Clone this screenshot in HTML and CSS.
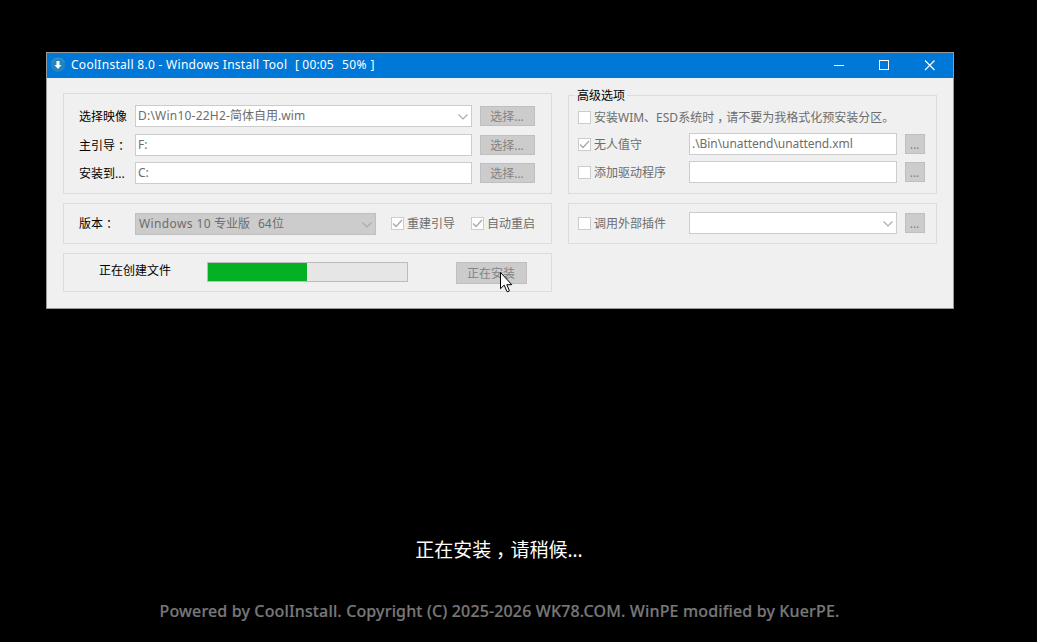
FILE: index.html
```
<!DOCTYPE html>
<html lang="zh-CN">
<head>
<meta charset="utf-8">
<title>CoolInstall 8.0</title>
<link rel="stylesheet" href="styles.css">
</head>
<body>
<main class="desktop">
  <section class="window">
    <header class="titlebar">
      <svg class="app-icon" width="16" height="16" viewBox="0 0 16 16"><circle cx="8" cy="8" r="7.2" fill="#2484bb"/><path d="M1.500 5.500a7 7 0 0 1 13 0" fill="none" stroke="#4699c8"/><path d="M6.500 4h3v4h2L8 12 4.500 8h2z" fill="#fff"/></svg>
      <h1 class="title"><span class="t-name">CoolInstall 8.0 - Windows Install Tool</span><span class="t-time">[ 00:05</span><span class="t-pct">50% ]</span></h1>
      <svg class="controls" width="104" height="12" viewBox="0 0 104 12" fill="none" stroke="#fff"><path d="M1 6.500h10"/><rect x="46.500" y="1.500" width="9" height="9"/><path d="M92 1.500l9.500 9.500M101.500 1.500L92 11" stroke-width="1.100"/></svg>
    </header>
    <div class="content">
      <div class="column left">
        <section class="panel paths">
          <div class="row"><label>选择映像</label><div class="field"><span class="f-path">D:\Win10-22H2-</span><span>简体自用</span><span class="f-ext">.wim</span><svg class="chevron" width="10" height="6" viewBox="0 0 10 6"><path d="M.5.5L5 5 9.500.5"/></svg></div><button class="btn">选择...</button></div>
          <div class="row second"><label>主引导<span class="mid">：</span></label><div class="field">F:</div><button class="btn">选择...</button></div>
          <div class="row third"><label>安装到...</label><div class="field">C:</div><button class="btn">选择...</button></div>
        </section>
        <section class="panel edition">
          <label>版本<span class="mid">：</span></label>
          <div class="field gray"><span class="f-win">Windows 10</span><span class="f-pro">专业版</span><span class="f-bit">64</span><span>位</span><svg class="chevron" width="10" height="6" viewBox="0 0 10 6"><path d="M.5.5L5 5 9.500.5"/></svg></div>
          <div class="option rebuild"><i class="check"><svg width="11" height="11" viewBox="0 0 11 11"><path d="M1 5.500L4 8.500 10 2"/></svg></i>重建引导</div>
          <div class="option reboot"><i class="check"><svg width="11" height="11" viewBox="0 0 11 11"><path d="M1 5.500L4 8.500 10 2"/></svg></i>自动重启</div>
        </section>
        <section class="panel status">
          <label>正在创建文件</label>
          <div class="progress"><div class="bar" style="width:99px"></div></div>
          <button class="btn install">正在安装</button>
          <svg class="cursor" width="13" height="21" viewBox="0 0 13 21"><path d="M.5.5v16.200l3.700-3.600 2.600 6.200q1 .9 2.300-.1l.1-1.100-2.400-5.400h5z" fill="#fff" stroke="#000"/></svg>
        </section>
      </div>
      <div class="column right">
        <section class="panel advanced">
          <h2 class="legend">高级选项</h2>
          <div class="option notice"><i class="check"></i><span class="drop">安装WIM、ESD系统时<span class="mid">，</span>请不要为我格式化预安装分区。</span></div>
          <div class="row unattend"><div class="option"><i class="check"><svg width="11" height="11" viewBox="0 0 11 11"><path d="M1 5.500L4 8.500 10 2"/></svg></i><span class="drop">无人值守</span></div><div class="field"><span class="f-xml">.\Bin\unattend\unattend.xml</span></div><button class="btn">...</button></div>
          <div class="row driver"><div class="option"><i class="check"></i><span class="drop">添加驱动程序</span></div><div class="field"></div><button class="btn">...</button></div>
        </section>
        <section class="panel plugin">
          <div class="row"><div class="option"><i class="check"></i><span class="drop">调用外部插件</span></div><div class="field"><svg class="chevron" width="10" height="6" viewBox="0 0 10 6"><path d="M.5.5L5 5 9.500.5"/></svg></div><button class="btn">...</button></div>
        </section>
      </div>
    </div>
  </section>
  <p class="wait">正在安装<span class="mid">，</span>请稍候...</p>
  <p class="copyright">Powered by CoolInstall. Copyright (C) 2025-2026 WK78.COM. WinPE modified by KuerPE.</p>
</main>
</body>
</html>
```
FILE: styles.css
```
* { box-sizing: border-box; }
body { margin: 0; background: #000; font: 12px/16px "Noto Sans", "Noto Sans CJK SC", sans-serif; color: #000; }
.desktop { width: 1037px; height: 642px; overflow: hidden; padding: 52px 0 0 46px; }
.window { width: 908px; height: 257px; border: 1px solid #999; background: #f0f0f0; }
.titlebar { display: flex; align-items: center; height: 25px; padding: 0 16px 1px 3px; background: #0078d7; color: #fff; }
.title { display: flex; margin: 0 auto 0 5px; font-size: 12px; font-weight: 400; line-height: 16px; white-space: pre; }
.t-name { width: 224px; letter-spacing: .29px; }
.t-time { width: 47px; letter-spacing: .15px; }
.t-pct { letter-spacing: .4px; }
.app-icon, .controls, .check svg { display: block; }
.content { display: flex; gap: 16px; padding: 15px 0 0 16px; }
.column { display: flex; flex-direction: column; }
.left { width: 489px; }
.right { width: 369px; padding-top: 2px; }
.panel { border: 1px solid #dcdcdc; }
.paths { height: 101px; padding: 11px 0 0 15px; }
.row { display: flex; align-items: center; height: 22px; }
.row label { width: 56px; padding-top: 2px; }
label, .option, .legend { white-space: nowrap; }
.mid { padding: 0 .25em; font-feature-settings: "halt"; }
.second { margin-top: 7px; }
.third { margin-top: 6px; }
.field { position: relative; display: flex; width: 337px; height: 22px; padding: 2px; border: 1px solid #ccc; background: #fff; color: #6d6d6d; white-space: pre; }
.f-path { width: 92px; letter-spacing: .22px; }
.f-ext { letter-spacing: .1px; }
.f-win { width: 75px; letter-spacing: .38px; }
.f-pro { width: 44px; }
.f-bit { width: 14px; }
.f-xml { letter-spacing: -.06px; }
.chevron { position: absolute; right: 3px; top: 8px; fill: none; stroke: #aaa; stroke-width: 1.1; }
.btn { width: 55px; height: 20px; margin: 0 0 0 8px; padding: 1px 1px 0 0; border: 1px solid #bfbfbf; background: #ccc; color: #838383; font: inherit; line-height: 16px; }
.edition { display: flex; align-items: center; height: 41px; margin-top: 9px; padding-left: 15px; }
.edition label { width: 56px; }
.gray { width: 241px; padding-left: 3px; border-color: #bfbfbf; background: #ccc; }
.option { display: flex; align-items: center; height: 16px; color: #6d6d6d; }
.check { flex: none; width: 13px; height: 13px; margin-right: 3px; border: 1px solid #ccc; background: #fff; }
.check path { fill: none; stroke: #aaa; stroke-width: 1.3; }
.drop { padding-top: 2px; }
.rebuild { margin-left: 15px; }
.reboot { margin-left: 16px; }
.status { position: relative; display: flex; height: 39px; margin-top: 9px; padding: 8px 0 0 35px; }
.status label { width: 108px; margin-top: 1px; }
.progress { width: 201px; height: 20px; border: 1px solid #bcbcbc; background: #e6e6e6; }
.bar { height: 18px; background: #06b025; }
.install { width: 71px; height: 22px; margin-left: 48px; }
.cursor { position: absolute; left: 436px; top: 18px; }
.advanced { position: relative; height: 99px; padding: 13px 0 0 9px; }
.legend { position: absolute; left: 6px; top: -8px; margin: 0; padding: 0 2px; background: #f0f0f0; font-size: 12px; font-weight: 400; line-height: 16px; }
.right .row .option { width: 111px; }
.right .field { width: 208px; }
.right .btn { width: 20px; }
.unattend { margin-top: 8px; }
.driver { margin-top: 6px; }
.plugin { height: 41px; margin-top: 9px; padding: 8px 0 0 9px; }
.wait { width: 906px; margin: 227px 0 0; color: #fff; font-size: 19px; line-height: 28px; text-align: center; }
.copyright { width: 907px; margin: 36px 0 0; color: #787878; font-size: 16px; font-weight: 500; line-height: 22px; letter-spacing: .145px; text-align: center; -webkit-text-stroke: .2px #787878; }
```
